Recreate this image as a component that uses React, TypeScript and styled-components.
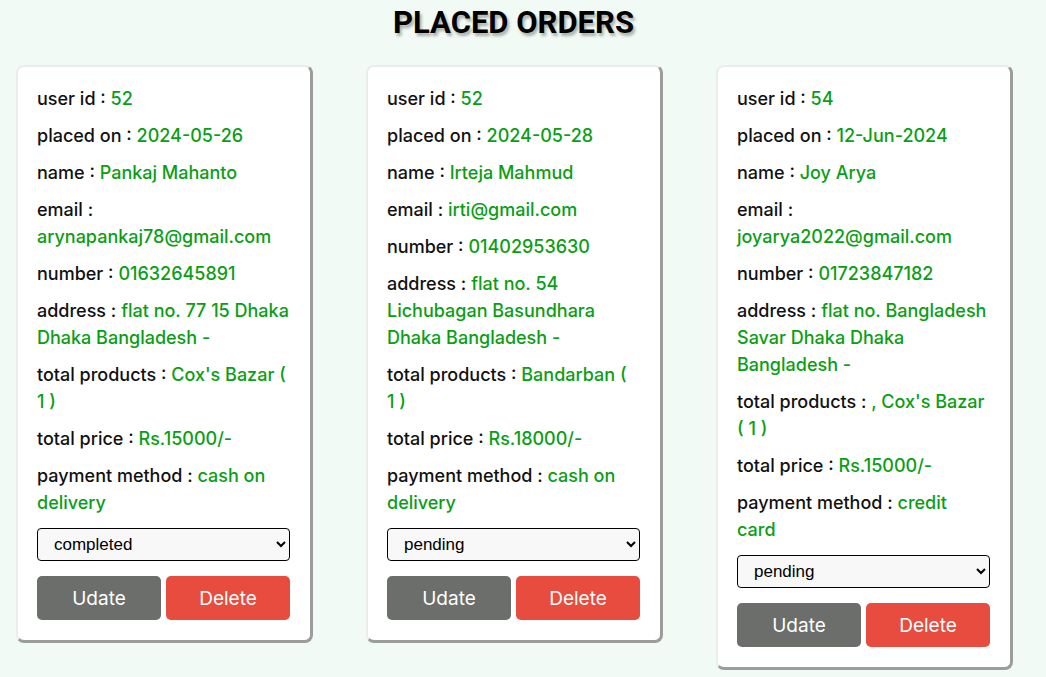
import styled, { createGlobalStyle } from "styled-components";

interface Order {
  userId: string;
  placedOn: string;
  name: string;
  email: string;
  number: string;
  address: string;
  products: string;
  price: string;
  method: string;
  status: string;
}

// keep the quantity and its closing bracket together, as the reference wraps them
const qty = (n: number) => `( ${n}\u00a0)`;

const orders: Order[] = [
  {
    userId: "52",
    placedOn: "2024-05-26",
    name: "Pankaj Mahanto",
    email: "arynapankaj78@gmail.com",
    number: "01632645891",
    address: "flat no. 77 15 Dhaka Dhaka Bangladesh -",
    products: `Cox's Bazar ${qty(1)}`,
    price: "Rs.15000/-",
    method: "cash on delivery",
    status: "completed",
  },
  {
    userId: "52",
    placedOn: "2024-05-28",
    name: "Irteja Mahmud",
    email: "irti@gmail.com",
    number: "01402953630",
    address: "flat no. 54 Lichubagan Basundhara Dhaka Bangladesh -",
    products: `Bandarban ${qty(1)}`,
    price: "Rs.18000/-",
    method: "cash on delivery",
    status: "pending",
  },
  {
    userId: "54",
    placedOn: "12-Jun-2024",
    name: "Joy Arya",
    email: "joyarya2022@gmail.com",
    number: "01723847182",
    address: "flat no. Bangladesh Savar Dhaka Dhaka Bangladesh -",
    products: `, Cox's Bazar ${qty(1)}`,
    price: "Rs.15000/-",
    method: "credit card",
    status: "pending",
  },
];

const GlobalStyle = createGlobalStyle`
  * {
    box-sizing: border-box;
  }
  body {
    margin: 0;
    background: #f1faf4;
    font-family: "Inter", "Noto Sans", sans-serif;
  }
`;

export default function App() {
  return (
    <>
      <GlobalStyle />
      <Section>
        <Heading>PLACED ORDERS</Heading>
        <Grid>
          {orders.map((order, i) => (
            <OrderCard key={i} order={order} />
          ))}
        </Grid>
      </Section>
    </>
  );
}

const OrderCard = ({ order }: { order: Order }) => {
  const rows: [string, string][] = [
    ["user id", order.userId],
    ["placed on", order.placedOn],
    ["name", order.name],
    ["email", order.email],
    ["number", order.number],
    ["address", order.address],
    ["total products", order.products],
    ["total price", order.price],
    ["payment method", order.method],
  ];

  return (
    <Card>
      {rows.map(([label, value]) => (
        <Row key={label}>
          {label} : <Value>{value}</Value>
        </Row>
      ))}
      <StatusSelect defaultValue={order.status}>
        <option value="pending">pending</option>
        <option value="completed">completed</option>
      </StatusSelect>
      <Actions>
        <Button $variant="update">Udate</Button>
        <Button $variant="delete">Delete</Button>
      </Actions>
    </Card>
  );
};

// Styles
const Section = styled.section`
  padding: 4px 35px 20px 16px;
`;

const Heading = styled.h1`
  margin: 0 0 23px;
  text-align: center;
  font-family: "Roboto", sans-serif;
  font-weight: 700;
  font-size: 31px;
  line-height: 38px;
  color: #000;
  text-shadow: 2px 3px 3px rgba(0, 0, 0, 0.3);
`;

const Grid = styled.div`
  display: flex;
  align-items: flex-start;
  gap: 53px;
`;

const Card = styled.div`
  flex: none;
  width: 297px;
  padding: 18px 20px 20px 19px;
  background: #fff;
  border-style: solid;
  border-width: 2px 3px 3px 2px;
  border-color: #ececec #9c9c9c #9c9c9c #ececec;
  border-radius: 8px;
`;

const Row = styled.p`
  margin: 0 0 10px;
  font-size: 18px;
  font-weight: 500;
  line-height: 27px;
  color: #111;
`;

const Value = styled.span`
  color: #0a9e14;
`;

const StatusSelect = styled.select`
  display: block;
  width: 100%;
  height: 33px;
  margin-top: 12px;
  padding: 0 10px 0 12px;
  font-family: "Liberation Sans", Arial, sans-serif;
  font-size: 17px;
  color: #000;
  background: #f8f8f9;
  border: 1px solid #000;
  border-radius: 4px;
`;

const Actions = styled.div`
  display: flex;
  gap: 5px;
  margin-top: 15px;
`;

const Button = styled.button<{ $variant: "update" | "delete" }>`
  flex: 1;
  height: 44px;
  border: none;
  border-radius: 5px;
  font-family: "Inter", "Noto Sans", sans-serif;
  font-size: 19px;
  font-weight: 400;
  color: #fff;
  cursor: pointer;
  background: ${({ $variant }) => ($variant === "update" ? "#6b6e6a" : "#e74c3f")};
`;
